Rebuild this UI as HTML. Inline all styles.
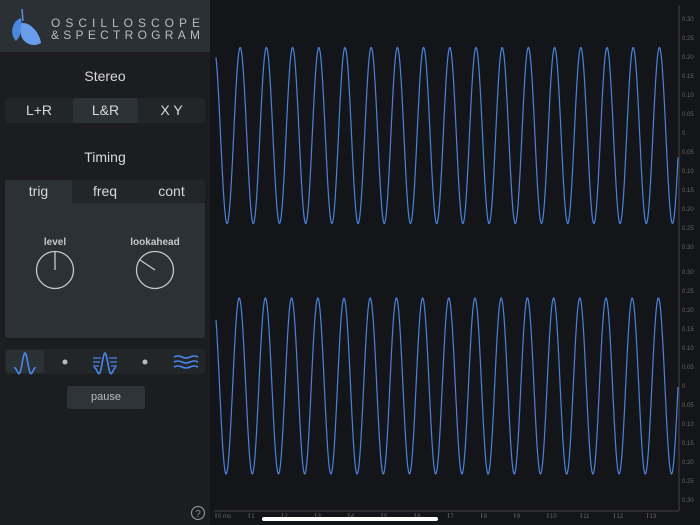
<!DOCTYPE html><html><head><style>
body{margin:0;width:700px;height:525px;background:#141518;font-family:"Liberation Sans",sans-serif;overflow:hidden;position:relative}
.abs{position:absolute}
#left{left:0;top:0;width:210px;height:525px;background:#1b1d20}
#hdr{left:0;top:0;width:210px;height:52px;background:#2b3034}
.t{color:#d8d8d8;text-align:center}
.seg{background:#222629;border-radius:3px}
.cell{position:absolute;top:0;height:100%;text-align:center;color:#d8d8d8;font-size:14px}
</style></head><body>
<div id="left" class="abs"></div>
<div id="hdr" class="abs">
<svg class="abs" style="left:8px;top:6px" width="36" height="42" viewBox="0 0 36 42">
<path d="M14 3 L15 15" stroke="#5b8fe0" stroke-width="1.5"/>
<path d="M13 12 C4 15 1 28 8 35 C13 30 15 21 13 12Z" fill="#4c87e0"/>
<path d="M14 17 C23 16 32 28 33 37 C27 41 18 39 14 32 C12 28 12 21 14 17Z" fill="#6a9cec"/>
</svg>
<svg class="abs" style="left:0;top:0" width="210" height="52">
<text x="51" y="27" font-size="12" fill="#b8bcbf" textLength="149" lengthAdjust="spacing" font-family="Liberation Sans">OSCILLOSCOPE</text>
<text x="51" y="39" font-size="12" fill="#b8bcbf" textLength="149" lengthAdjust="spacing" font-family="Liberation Sans">&amp;SPECTROGRAM</text>
</svg>
</div>
<div class="abs t" style="left:0;width:210px;top:68px;font-size:14px">Stereo</div>
<div class="abs seg" style="left:5px;top:98px;width:200px;height:25px">
<div class="cell" style="left:0;width:68px;line-height:25px">L+R</div>
<div class="cell" style="left:68px;width:65px;line-height:25px;background:#2c3235;border-radius:3px">L&amp;R</div>
<div class="cell" style="left:133px;width:67px;line-height:25px">X Y</div>
</div>
<div class="abs t" style="left:0;width:210px;top:149px;font-size:14px">Timing</div>
<div class="abs seg" style="left:5px;top:180px;width:200px;height:23px">
<div class="cell" style="left:0;width:67px;line-height:23px;background:#2b3134">trig</div>
<div class="cell" style="left:67px;width:66px;line-height:23px">freq</div>
<div class="cell" style="left:133px;width:67px;line-height:23px">cont</div>
</div>
<div class="abs" style="left:5px;top:203px;width:200px;height:135px;background:#2b3134;border-radius:0 0 3px 3px"></div>
<div class="abs t" style="left:25px;width:60px;top:237px;font-size:10px;font-weight:bold;color:#c8c8c8">level</div>
<div class="abs t" style="left:115px;width:80px;top:237px;font-size:10px;font-weight:bold;color:#c8c8c8">lookahead</div>
<svg class="abs" style="left:0;top:0" width="210" height="420">
<circle cx="55" cy="270" r="18.5" fill="none" stroke="#c8c8c8" stroke-width="1.3"/>
<line x1="55" y1="252" x2="55" y2="270" stroke="#c8c8c8" stroke-width="1.3"/>
<circle cx="155" cy="270" r="18.5" fill="none" stroke="#c8c8c8" stroke-width="1.3"/>
<line x1="140" y1="260" x2="155" y2="270" stroke="#c8c8c8" stroke-width="1.3"/>
</svg>
<div class="abs seg" style="left:5px;top:349px;width:200px;height:25px"></div>
<div class="abs" style="left:6px;top:350px;width:38px;height:23px;background:#2b3034;border-radius:3px"></div>
<svg id="icons" class="abs" style="left:0;top:340px" width="210" height="40" fill="none" stroke="#4a86e8" stroke-width="1.6">
<circle cx="65" cy="22" r="2.5" fill="#bbb" stroke="none"/>
<path d="M93 18h8M109 18h8M93 22h7M110 22h7M93 26h6M111 26h6" stroke-width="1.3"/>
<circle cx="145" cy="22" r="2.5" fill="#bbb" stroke="none"/>
<path d="M174 17 q4 -2 8 0 t8 0 t8 0M174 22 q4 -2 8 0 t8 0 t8 0M174 27 q4 -2 8 0 t8 0 t8 0"/>
</svg>
<div class="abs" style="left:67px;top:386px;width:78px;height:23px;background:#2e3437;border-radius:3px;color:#b8bcbf;font-size:11px;text-align:center;line-height:23px">pause</div>
<svg class="abs" style="left:190px;top:505px" width="16" height="16"><circle cx="8" cy="8" r="6.5" fill="none" stroke="#8a8e91" stroke-width="1.2"/><text x="8" y="12" font-size="10" fill="#8a8e91" text-anchor="middle" font-family="Liberation Sans">?</text></svg>
<svg id="plot" class="abs" style="left:0;top:0" width="700" height="525"></svg>
<div class="abs" style="left:262px;top:517px;width:176px;height:4px;background:#fff;border-radius:2px"></div>
<script>
function sinc(cx){var d='';for(var i=0;i<=44;i++){var u=(i-22)/22*2.6*Math.PI;var v=u==0?1:Math.sin(u)/u;var x=cx-11+i*0.5;var y=30-17*v;d+=(i?'L':'M')+x.toFixed(1)+' '+y.toFixed(1);}return '<path d="'+d+'"/>';}
document.getElementById('icons').innerHTML+=sinc(25)+sinc(105);
var s='';
function wave(cy,ph){var d='';for(var x=216;x<=678;x+=0.5){var y=cy-88*Math.cos(2*Math.PI*(x-ph)/26.2);d+=(x==216?'M':'L')+x+' '+y.toFixed(1);}return '<path d="'+d+'" fill="none" stroke="#4a82dc" stroke-width="1.2"/>';}
s+=wave(135.5,214)+wave(386,213);
s+='<line x1="679" y1="5" x2="679" y2="511" stroke="#444" stroke-width="1"/><line x1="214" y1="511" x2="679" y2="511" stroke="#444" stroke-width="1"/>';
var L=['0.30','0.25','0.20','0.15','0.10','0.05','0','0.05','0.10','0.15','0.20','0.25','0.30'];
for(var i=0;i<13;i++){s+='<text x="682" y="'+(21+i*19)+'" font-size="6" fill="#666" font-family="Liberation Sans">'+L[i]+'</text>';s+='<text x="682" y="'+(274+i*19)+'" font-size="6" fill="#666" font-family="Liberation Sans">'+L[i]+'</text>';}
for(var k=0;k<14;k++){var x=216+k*33.2;s+='<line x1="'+x+'" y1="513" x2="'+x+'" y2="518" stroke="#555"/><text x="'+(x+2)+'" y="518" font-size="6" fill="#666" font-family="Liberation Sans">'+(k==0?'0 ms':k)+'</text>';}
document.getElementById('plot').innerHTML=s;
</script>
</body></html>
